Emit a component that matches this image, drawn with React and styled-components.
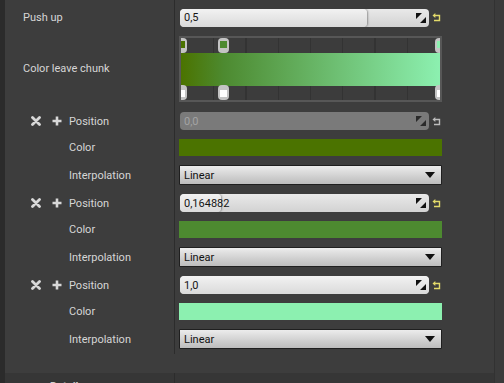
import React from 'react';
import styled, { createGlobalStyle } from 'styled-components';

const GlobalStyle = createGlobalStyle`
  html, body {
    margin: 0;
    padding: 0;
    background: #3d3d3d;
  }
  body {
    font-family: Roboto, "Noto Sans", "Liberation Sans", sans-serif;
  }
`;

const Page = styled.div`
  width: 504px;
  height: 383px;
  overflow: hidden;
  display: flex;
  background: #3d3d3d;
`;

const LeftStrip = styled.div`
  width: 5px;
  background: #2b2b2b;
`;

const Main = styled.div`
  width: 489px;
  display: flex;
  flex-direction: column;
  border-right: 1px solid #323232;
`;

const RightGutter = styled.div`
  flex: 1;
  background: #3b3b3b;
`;

const Rows = styled.div`
  display: flex;
  flex-direction: column;
  flex-shrink: 0;
`;

const Row = styled.div`
  display: grid;
  grid-template-columns: 170px 1fr;
  height: ${({ h }) => h}px;
`;

const LabelCell = styled.div`
  display: flex;
  align-items: center;
  padding-left: ${({ indent }) => indent}px;
  padding-bottom: ${({ lift }) => lift || 0}px;
  border-right: 1px solid #2c2c2c;
  color: #d6d6d6;
  font-size: 11px;
`;

const ValueCell = styled.div`
  display: flex;
  align-items: ${({ top }) => (top ? 'flex-start' : 'center')};
  padding-left: 4px;
  padding-top: ${({ top }) => (top ? 1 : 0)}px;
`;

const IconButton = styled.span`
  display: inline-flex;
  width: 21px;
  align-items: center;
  justify-content: center;
`;

const Spin = styled.div`
  position: relative;
  margin-left: 1px;
  width: 249px;
  height: 18px;
  border-radius: 4px;
  background: ${({ disabled }) =>
    disabled ? '#7a7a7a' : 'linear-gradient(#e9e9e9, #d2d2d2)'};
  overflow: hidden;
  display: flex;
  align-items: center;
`;

const SpinFill = styled.div`
  position: absolute;
  left: 0;
  top: 0;
  bottom: 0;
  border-radius: 4px;
  background: linear-gradient(#f2f2f2, #dadada);
  box-shadow: 1px 0 2px rgba(0, 0, 0, 0.35);
`;

const SpinText = styled.span`
  position: relative;
  padding-left: 4px;
  font-size: 11px;
  color: ${({ disabled }) => (disabled ? '#a3a3a3' : '#151515')};
  flex: 1;
`;

const SpinIcon = styled.svg`
  position: relative;
  margin-right: 3px;
`;

const Reset = styled.svg`
  margin-left: 3px;
`;

const Swatch = styled.div`
  width: 263px;
  height: 17px;
  background: ${({ color }) => color};
`;

const Combo = styled.div`
  width: 251px;
  height: 18px;
  border: 1px solid #1f1f1f;
  border-radius: 1px;
  background: linear-gradient(#ececec, #cfcfcf 60%, #bdbdbd);
  display: flex;
  align-items: center;
  justify-content: space-between;
  padding: 0 6px 0 4px;
  font-size: 11px;
  color: #111;
`;

const Editor = styled.div`
  position: relative;
  width: 259px;
  height: 62px;
  border: 2px solid #575757;
  background: #3c3c3c;
  overflow: hidden;
  background-image: repeating-linear-gradient(
    90deg,
    transparent 0 31px,
    #333333 31px 32.3px
  );
  background-position: 1px 0;
`;

const GradientBar = styled.div`
  position: absolute;
  left: 0;
  right: 0;
  top: 15px;
  height: 33px;
  background: ${({ stops }) =>
    `linear-gradient(90deg, ${stops
      .map((s) => `${s.color} ${(s.pos * 100).toFixed(2)}%`)
      .join(', ')})`};
`;

const Handle = styled.div`
  position: absolute;
  width: 11px;
  height: 15px;
  border-radius: 4px;
  background: #c4c4c4;
  display: flex;
  justify-content: center;
  align-items: ${({ bottom }) => (bottom ? 'flex-end' : 'flex-start')};
  padding: 3px 0;
  box-sizing: border-box;
  ${({ bottom }) => (bottom ? 'bottom: 0;' : 'top: 0;')}
`;

const HandleDot = styled.div`
  width: 7px;
  height: 7px;
  background: ${({ color }) => color};
`;

const Spacer = styled.div`
  height: 19px;
  flex-shrink: 0;
`;

const Footer = styled.div`
  flex: 1;
  min-height: 0;
  overflow: hidden;
  display: grid;
  grid-template-columns: 170px 1fr;
  background: #363636;
`;

const FooterLabel = styled.div`
  border-right: 1px solid #2c2c2c;
  padding-left: 45px;
  padding-top: 7px;
  font-size: 11px;
  font-weight: bold;
  color: #cfcfcf;
`;

const XIcon = () => (
  <svg width="10" height="10" viewBox="0 0 10 10">
    <path d="M1.5 1.5 L8.5 8.5 M8.5 1.5 L1.5 8.5" stroke="#d8d8d8" strokeWidth="2.8" strokeLinecap="round" />
  </svg>
);

const PlusIcon = () => (
  <svg width="10" height="10" viewBox="0 0 10 10">
    <path d="M5 0.5 V9.5 M0.5 5 H9.5" stroke="#d8d8d8" strokeWidth="2.6" />
  </svg>
);

const ResetIcon = ({ active }) => (
  <Reset width="9" height="9" viewBox="0 0 9 9">
    <path
      d="M3 2.5 H7.5 V7.5 H2"
      fill="none"
      stroke={active ? '#e3da6a' : '#bdbdbd'}
      strokeWidth="1.4"
    />
    <path d="M0.5 2.5 L3.3 0 V5 Z" fill={active ? '#e3da6a' : '#bdbdbd'} />
  </Reset>
);

const SpinBox = ({ value, fill, disabled, resetActive }) => (
  <>
    <Spin disabled={disabled}>
      {!disabled && fill > 0 && <SpinFill style={{ width: `${fill * 100}%` }} />}
      <SpinText disabled={disabled}>{value}</SpinText>
      <SpinIcon width="10" height="10" viewBox="0 0 10 10">
        <path d="M0 0 H6 L0 6 Z M10 10 H4 L10 4 Z" fill={disabled ? '#2a2a2a' : '#111'} />
      </SpinIcon>
    </Spin>
    <ResetIcon active={resetActive} />
  </>
);

const Dropdown = ({ value }) => (
  <Combo>
    <span>{value}</span>
    <svg width="10" height="6" viewBox="0 0 10 6">
      <path d="M0 0 H10 L5 6 Z" fill="#111" />
    </svg>
  </Combo>
);

const stops = [
  { pos: 0, color: '#4b7300', value: '0,0', fill: 0, disabled: true, reset: false },
  { pos: 0.164882, color: '#4d8a30', value: '0,164882', fill: 0.164882, reset: true },
  { pos: 1, color: '#8cf0b0', value: '1,0', fill: 1, reset: true },
];

const GradientEditor = () => (
  <Editor>
    <GradientBar stops={stops} />
    {stops.map((s, i) => {
      const x = s.pos * 259 - 5.5;
      return (
        <React.Fragment key={i}>
          <Handle style={{ left: x }}>
            <HandleDot color={s.color} />
          </Handle>
          <Handle bottom style={{ left: x }}>
            <HandleDot color="#ffffff" />
          </Handle>
        </React.Fragment>
      );
    })}
  </Editor>
);

const StopRows = ({ stop }) => (
  <>
    <Row h={26}>
      <LabelCell indent={20}>
        <IconButton><XIcon /></IconButton>
        <IconButton><PlusIcon /></IconButton>
        <span style={{ marginLeft: 2 }}>Position</span>
      </LabelCell>
      <ValueCell>
        <SpinBox value={stop.value} fill={stop.fill} disabled={stop.disabled} resetActive={stop.reset} />
      </ValueCell>
    </Row>
    <Row h={26}>
      <LabelCell indent={64}>Color</LabelCell>
      <ValueCell>
        <Swatch color={stop.color} />
      </ValueCell>
    </Row>
    <Row h={30}>
      <LabelCell indent={64}>Interpolation</LabelCell>
      <ValueCell>
        <Dropdown value="Linear" />
      </ValueCell>
    </Row>
  </>
);

export default function App() {
  return (
    <>
      <GlobalStyle />
      <Page>
        <LeftStrip />
        <Main>
          <Rows>
            <Row h={35}>
              <LabelCell indent={18}>Push up</LabelCell>
              <ValueCell>
                <SpinBox value="0,5" fill={0.75} resetActive />
              </ValueCell>
            </Row>
            <Row h={73}>
              <LabelCell indent={18} lift={6}>Color leave chunk</LabelCell>
              <ValueCell top>
                <GradientEditor />
              </ValueCell>
            </Row>
            {stops.map((s, i) => (
              <StopRows key={i} stop={s} />
            ))}
          </Rows>
          <Spacer />
          <Footer>
            <FooterLabel>Detail</FooterLabel>
            <div />
          </Footer>
        </Main>
        <RightGutter />
      </Page>
    </>
  );
}
